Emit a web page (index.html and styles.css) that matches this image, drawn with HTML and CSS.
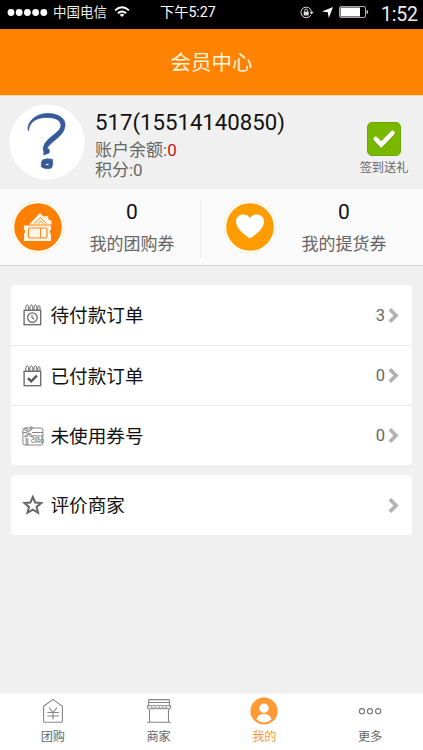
FILE: index.html
```html
<!DOCTYPE html>
<html lang="zh-CN">
<head>
<meta charset="utf-8">
<title>会员中心</title>
<link rel="stylesheet" href="styles.css">
</head>
<body>
<div class="app">
  <div class="status">
    <div class="carrier">
      <svg width="41" height="9" viewBox="0 0 41 9" fill="#fff"><circle cx="4" cy="4.5" r="3.4"/><circle cx="12.2" cy="4.5" r="3.4"/><circle cx="20.4" cy="4.5" r="3.4"/><circle cx="28.6" cy="4.5" r="3.4"/><circle cx="36.8" cy="4.5" r="3.4"/></svg>
      <span>中国电信</span>
      <svg class="wifi" width="16" height="12" viewBox="0 0 16 12" fill="none" stroke="#fff" stroke-width="1.8"><path d="M1 4.400Q8-1.800 15 4.400M3.800 7.300Q8 3.600 12.200 7.300"/><path d="M8 11 5.700 8.700Q8 7 10.300 8.700Z" fill="#fff" stroke="none"/></svg>
    </div>
    <span class="time">下午5:27</span>
    <div class="indicators">
      <svg width="14" height="13" viewBox="0 0 14 13" fill="none" stroke="#ddd"><path d="M10.800 9.200A5.300 5.300 0 1 1 11.500 5.500"/><path d="M9.500 5.800h4.200l-2.100 2.700Z" fill="#ddd" stroke="none"/><rect x="3.700" y="5.800" width="5" height="3.600" fill="#ddd" stroke="none"/><path d="M4.800 6V4.500a1.400 1.400 0 0 1 2.800 0V6"/></svg>
      <svg class="nav" width="11" height="11" viewBox="0 0 11 11" fill="#fff"><path d="M11 0 6.800 11 5.800 5.200 0 4.500Z"/></svg>
      <svg width="30" height="12" viewBox="0 0 30 12"><rect x=".5" y=".5" width="26" height="11" rx="1.5" fill="none" stroke="#aaa"/><rect x="1.500" y="1.500" width="19.500" height="9" fill="#fff"/><path d="M27.500 4q1.700 0 1.700 2t-1.700 2Z" fill="#ccc"/></svg>
      <span class="clock">1:52</span>
    </div>
  </div>
  <header class="title">会员中心</header>
  <section class="user">
    <svg class="avatar" width="76" height="76" viewBox="0 0 76 76"><circle cx="38" cy="38" r="37.600" fill="#fff"/><g fill="#365a9a" stroke="#365a9a" stroke-width=".7" stroke-linejoin="round"><path d="M19.500 27C17 20 25 9.500 39 9.500C50 9.500 57 15 56 22C55 33 40 38 38 45C40 44 41 46 40 49L34.500 51C36 48 33.500 46 34.500 43C37 33 52 29 52 21C51 15 45 13.500 37 13.500C26 13.500 20 19 19.500 27Z"/><path fill-rule="evenodd" d="M33.500 56Q38 54 43.500 55.500Q44.500 60 42.500 64Q37 66 32.500 63Q31.500 59 33.500 56ZM37 59.500 36 61.500H39L40.500 59.500Z"/></g></svg>
    <div class="info">
      <div class="name">517(15514140850)</div>
      <div class="meta">账户余额:<b>0</b></div>
      <div class="meta">积分:0</div>
    </div>
    <div class="checkin">
      <svg width="34" height="34" viewBox="0 0 34 34"><rect x=".5" y=".5" width="33" height="33" rx="4.500" fill="#78b800" stroke="#6caa00"/><path d="m8.500 17.500 5.700 5.700 11.500-12" fill="none" stroke="#5b9200" stroke-width="4.500" stroke-linecap="square" opacity=".4" transform="translate(0 1)"/><path d="m8.700 17 5.500 5.700L25.500 11" fill="none" stroke="#fff" stroke-width="4.600" stroke-linecap="round"/></svg>
      <span>签到送礼</span>
    </div>
  </section>
  <section class="stats">
    <div class="stat">
      <svg width="54" height="54" viewBox="0 0 54 54"><circle cx="27" cy="27" r="26" fill="#fffefa" stroke="#ffe5bf" stroke-width=".8" stroke-dasharray="10 4"/><circle cx="27" cy="27" r="23.800" fill="#ff8000"/><path d="m18 24.500 11-11.500 3.500 3.500 4.500-.5.500 3.500 3 1v4Z" fill="#fff5e5"/><path d="m23 23.500 6.500-6 6 6M27 23.500l2.800-2.400 2.700 2.400" fill="none" stroke="#f28b28" stroke-width="1"/><path d="M13 25.500h27v4q-2.300 2 0 4.500v7H13v-7q2.300-2.500 0-4.500Z" fill="#fff5e5"/><rect x="17.500" y="28" width="18.500" height="10" rx="1.500" fill="none" stroke="#f28b28" stroke-width="1.200"/><path d="M29.500 28v10" stroke="#f28b28"/></svg>
      <div class="figure"><strong>0</strong><span>我的团购券</span></div>
    </div>
    <div class="stat second">
      <svg width="54" height="54" viewBox="0 0 54 54"><circle cx="27" cy="27" r="26" fill="#fffefa" stroke="#ffe9bf" stroke-width=".8" stroke-dasharray="10 4"/><circle cx="27" cy="27" r="23.800" fill="#ff9c00"/><path d="M27 38.500C22 35 13 29 13 21.500C13 14 23 12 27 18C31 12 41 14 41 21.500C41 29 32 35 27 38.500Z" fill="#fff"/></svg>
      <div class="figure"><strong>0</strong><span>我的提货券</span></div>
    </div>
  </section>
  <main>
    <div class="card">
      <div class="row">
        <svg width="22" height="24" viewBox="0 0 22 24" fill="none" stroke="#666"><rect x="2.100" y="7.300" width="16.600" height="14.400" stroke-width="1.300"/><path d="M3.800 7V3.800q1.400-4 2.800 0V7M8 7V3.800q1.400-4 2.800 0V7M12 7V3.800q1.400-4 2.800 0V7M15.800 7V3.800q1.200-3 2.200 0V7"/><circle cx="10.400" cy="14.600" r="4.800" stroke-width="1.200"/><path d="M10 11.700v3.100l2.300 1.500" stroke-width="1.100"/></svg>
        <span class="label">待付款订单</span><span class="count">3</span>
        <svg width="12" height="17" viewBox="0 0 12 17"><path d="m1.800 2.200 6.200 6.300-6.200 6.300" fill="none" stroke="#b2b2b2" stroke-width="3.700"/></svg>
      </div>
      <div class="row">
        <svg width="22" height="24" viewBox="0 0 22 24" fill="none" stroke="#666"><rect x="2.100" y="7.300" width="16.600" height="14.400" stroke-width="1.300"/><path d="M3.800 7V3.800q1.400-4 2.800 0V7M8 7V3.800q1.400-4 2.800 0V7M12 7V3.800q1.400-4 2.800 0V7M15.800 7V3.800q1.200-3 2.200 0V7"/><path d="m6 14.200 3.200 3.200 5.700-5.700" stroke="#555" stroke-width="2.400"/></svg>
        <span class="label">已付款订单</span><span class="count">0</span>
        <svg width="12" height="17" viewBox="0 0 12 17"><path d="m1.800 2.200 6.200 6.300-6.200 6.300" fill="none" stroke="#b2b2b2" stroke-width="3.700"/></svg>
      </div>
      <div class="row">
        <svg width="22" height="24" viewBox="0 0 22 24" fill="none" stroke="#777" stroke-width=".9"><rect x=".9" y="4" width="20" height="17" rx="2"/><path d="M1 8.500h4M10 8.500h11M4.200 21v-7M5.800 21v-7"/><path d="M6.500 7.800 2 5.500 4 3.500ZM7.500 7.200 9.200 2.500l1.500 2ZM6.500 8.500l-4 4.300 3-.2 1-3.500M8 9l3 4-3-.8-1-3"/><text class="gift" x="10.800" y="15">GIFT</text><text class="gift" x="9" y="19.300">CARD</text></svg>
        <span class="label">未使用券号</span><span class="count">0</span>
        <svg width="12" height="17" viewBox="0 0 12 17"><path d="m1.800 2.200 6.200 6.300-6.200 6.300" fill="none" stroke="#b2b2b2" stroke-width="3.700"/></svg>
      </div>
    </div>
    <div class="card">
      <div class="row">
        <svg width="22" height="24" viewBox="0 0 22 24"><path d="m10.800 4 2.400 5.500 6 .5-4.600 3.900 1.500 5.900-5.300-3.100-5.300 3.100L7 13.900 2.400 10l6-.5Z" fill="none" stroke="#666" stroke-width="2"/></svg>
        <span class="label">评价商家</span><span class="count"></span>
        <svg width="12" height="17" viewBox="0 0 12 17"><path d="m1.800 2.200 6.200 6.300-6.200 6.300" fill="none" stroke="#b2b2b2" stroke-width="3.700"/></svg>
      </div>
    </div>
  </main>
  <nav class="tabs">
    <div class="tab"><svg width="28" height="28" viewBox="0 0 28 28" fill="none" stroke="#858585" stroke-width="1.100"><path d="M4.600 9.300 14 2.400l9.400 6.900v15q0 1-1 1H5.600q-1 0-1-1Z"/><path d="m10 10.500 4 5 4-5M14 15.500v7M8.300 15.500h11.500M8.300 19h11.500"/></svg><span>团购</span></div>
    <div class="tab"><svg width="28" height="28" viewBox="0 0 28 28" fill="none" stroke="#858585" stroke-width="1.100"><path d="M3.500 8.500V3.500q0-.9 1-.9h19q1 0 1 .9v5M3.500 5.500h21M2.300 8.700h23.400M2.300 8.700q0 3.300 2.400 3.300 2 0 2.200-1.500 1.500 2.700 3.500 0 1.700 2.700 3.600 0 1.900 2.700 3.600 0 2 2.700 3.500 0 .2 1.500 2.200 1.500 2.400 0 2.400-3.300M4.500 12v13M23.500 12v13M2 25.200h24"/></svg><span>商家</span></div>
    <div class="tab active"><svg width="28" height="28" viewBox="0 0 28 28"><circle cx="14" cy="14" r="13.600" fill="#ff9933"/><circle cx="14" cy="11.300" r="4.700" fill="#fff"/><path d="M6.600 22.500Q7.500 17 14 17t7.400 5.500Q18 25.500 14 25.500t-7.400-3Z" fill="#fff"/></svg><span>我的</span></div>
    <div class="tab"><svg width="28" height="28" viewBox="0 0 28 28" fill="none" stroke="#777" stroke-width="1.100"><circle cx="6" cy="14.200" r="2.600"/><circle cx="14" cy="14.200" r="2.600"/><circle cx="22.200" cy="14.200" r="2.600"/></svg><span>更多</span></div>
  </nav>
</div>
</body>
</html>
```
FILE: styles.css
```css
* { box-sizing: border-box; }
body {
  margin: 0;
  background: #f0f0f0;
  font-family: Roboto, "Noto Sans CJK SC", sans-serif;
  color: #111;
}
svg { display: block; flex: none; }
.app {
  display: flex;
  flex-direction: column;
  width: 423px;
  height: 750px;
}
.status {
  display: grid;
  grid-template-columns: 160px 1fr auto;
  grid-template-rows: 24px;
  height: 29px;
  padding-right: 7px;
  background: #000;
  color: #eee;
  font-size: 13.5px;
  line-height: 24px;
}
.carrier, .indicators { display: flex; align-items: center; height: 24px; }
.carrier { padding-left: 7px; }
.carrier span { margin-left: 5px; }
.wifi { margin-left: 7px; }
.time { font-size: 14.200px; line-height: 25px; color: #fff; }
.nav { margin: 0 6px 0 8px; }
.clock {
  width: 35px;
  margin-left: 12px;
  padding-top: 6px;
  font-size: 19.500px;
  letter-spacing: -.2px;
  white-space: nowrap;
}
.title {
  height: 66px;
  padding-top: 1px;
  background: #ff8200;
  color: #fff5df;
  font-size: 20.500px;
  line-height: 66px;
  text-align: center;
}
.user {
  display: flex;
  height: 94px;
  padding: 8px 9px 0;
  border-top: 1px solid #ffd9a5;
}
.info { flex: 1; padding: 3px 0 0 10px; }
.name { font-size: 22.200px; line-height: 30px; }
.meta { color: #666; font-size: 17px; line-height: 20px; }
.name + .meta { margin-top: 3px; }
.meta b { color: #c9151b; font-weight: 400; }
.checkin {
  display: flex;
  flex-direction: column;
  align-items: center;
  width: 60px;
  padding-top: 18px;
  color: #666;
  font-size: 12.200px;
  line-height: 24px;
}
.stats {
  display: grid;
  grid-template-columns: 200px 1fr;
  height: 77px;
  padding: 11px 0;
  background: #fafafa;
  border-bottom: 1px solid #d5d5d5;
}
.stat { display: flex; padding-left: 11px; }
.stat.second { padding-left: 22px; border-left: 1px solid #ededed; }
.figure {
  display: flex;
  flex-direction: column;
  align-items: center;
  width: 86px;
  margin-left: 24px;
}
.figure strong { font-size: 21px; line-height: 25px; font-weight: 400; }
.figure span { margin-top: 6px; color: #666; font-size: 17px; line-height: 27px; white-space: nowrap; }
main { flex: 1; padding: 19px 11px 0; }
.card { margin-bottom: 10px; border-radius: 4px; background: #fff; }
.row { display: flex; align-items: center; height: 60px; padding: 0 12px 0 11px; }
.row + .row { border-top: 1px solid #eaeaea; }
.label { margin-left: 6.500px; padding-top: 2px; font-size: 18.600px; line-height: 28px; }
.count { margin-left: auto; margin-right: 3px; color: #666; font-size: 16.500px; }
.gift { fill: #777; stroke: none; font: 700 4.500px "Liberation Sans", sans-serif; }
.tabs {
  display: grid;
  grid-template-columns: repeat(4, 1fr);
  height: 57px;
  background: #fff;
  border-top: 1px solid #f7f7f7;
}
.tab {
  display: flex;
  flex-direction: column;
  align-items: center;
  padding-top: 3px;
  color: #666;
  font-size: 12.200px;
  line-height: 24px;
}
.tab.active { color: #ff9933; }
```
